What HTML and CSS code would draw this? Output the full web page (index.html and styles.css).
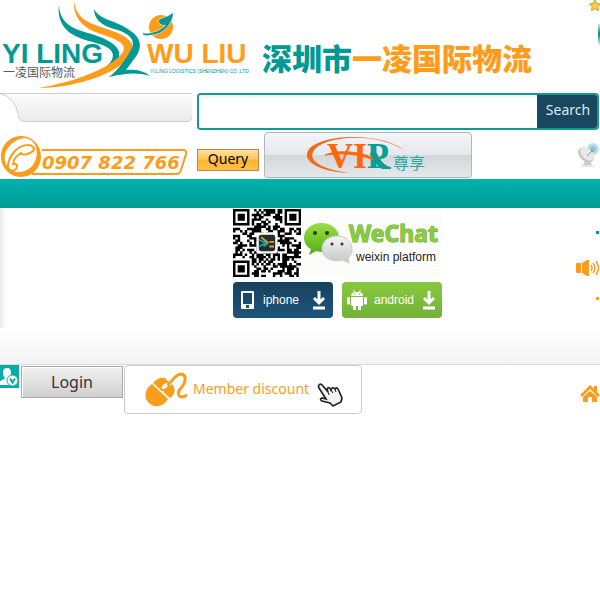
FILE: index.html
```html
<!DOCTYPE html>
<html lang="en">
<head>
<meta charset="utf-8">
<title>YI LING WU LIU</title>
<link rel="stylesheet" href="styles.css">
</head>
<body>
<header class="masthead">
  <svg class="logo" width="251" height="93" viewBox="0 0 251 93" role="img" aria-label="Yi Ling Wu Liu">
    <path class="teal" d="M59 5C60 22 70 28 88 33C106 38 122 46 119 57C117 65 108 69 101 70C110 65 115 58 112 52C108 44 92 43 80 38C64 32 57 20 59 5Z"/>
    <path class="orange" d="M74 1C76 18 88 23 104 28C122 34 136 40 132 52C126 70 80 88 38 88C75 82 112 68 123 52C128 42 112 38 98 33C80 27 73 14 74 1Z"/>
    <path class="teal" d="M94 9C100 20 114 20 126 28C140 36 143 44 137 55L126 70C134 69 143 70 150 76C138 72 126 73 109 77C118 70 127 58 132 48C136 38 126 32 114 29C100 25 94 18 94 9Z"/>
    <circle class="orange" cx="161" cy="27" r="12"/>
    <path class="planet-ring" d="M143 33C147 35 160 32 166 25C161 26 157 22 160 19C164 18 169 16 173 13C173 22 165 32 156 34C148 36 142 36 143 33Z"/>
    <text class="brand teal" x="2" y="63">YI LING</text>
    <text class="brand orange" x="147" y="63">WU LIU</text>
    <text class="brand-cn" x="3" y="77">一凌国际物流</text>
    <text class="brand-small teal" x="150" y="73">YI.LING LOGISTICS (SHENZHEN) CO.,LTD</text>
  </svg>
  <h1 class="company"><span class="c-teal">深圳市</span>一凌国际物流</h1>
  <div class="corner">
    <svg width="12" height="12" viewBox="0 0 12 12"><path d="M6 0L7.600 3.500L11.500 4L8.800 6.800L9.500 10.500L6 8.800L2.500 10.500L3.200 6.800L.5 4L4.400 3.500Z" fill="#fbd04a" stroke="#d99a1c"/></svg>
    <span class="knob"></span>
  </div>
</header>

<div class="search-row">
  <svg class="tab" width="192" height="30" viewBox="0 0 192 30">
    <defs><linearGradient id="tabfill" x2="0" y2="1"><stop offset="0" stop-color="#fbfbfb"/><stop offset="1" stop-color="#ececec"/></linearGradient></defs>
    <path d="M0 .5H192V24Q192 28.500 187 28.500H25Q18 28.500 18 20Q15 5 0 .5Z" fill="url(#tabfill)"/>
    <path d="M0 .5H192M0 .5Q15 5 18 20Q18 28.500 25 28.500H187Q191.500 28.500 191.500 24" fill="none" stroke="#cfcfcf"/>
  </svg>
  <form class="search">
    <input class="search-box" type="text" aria-label="Search text">
    <button class="search-btn" type="button">Search</button>
  </form>
</div>

<div class="tools">
  <svg class="phone" width="190" height="46" viewBox="0 0 190 46" role="img" aria-label="0907 822 766">
    <path d="M42 16H183Q187 16 186 20L181 36Q180 40 176 40H32" fill="none" stroke="#fc9c1b" stroke-width="2"/>
    <path fill="#fc9c1b" fill-rule="evenodd" d="M21 2A20 20.500 0 1 1 20.900 2ZM20 5C10 8 3 18 5 27C7 37 17 41 27 36C36 31 39 20 35 11C32 5 26 3 20 5Z"/>
    <path d="M33 13C30 9 20 11 14 18C8 25 6 34 10 36C14 38 17 35 17 32C17 30 14 29 13 31C13 27 16 22 21 19C22 22 30 20 33 17Q35 15 33 13Z" fill="#fff" stroke="#fc9c1b" stroke-width="2"/>
    <text class="phone-no" x="42" y="35">0907 822 766</text>
  </svg>
  <button class="query" type="button">Query</button>
  <button class="vip" type="button" aria-label="VIP">
    <svg width="130" height="42" viewBox="0 0 130 42">
      <text class="vip-text" x="26" y="34" fill="#ff6709">VI<tspan fill="#0a9d98">P</tspan></text>
      <path d="M104 17C86 0 28-2 10 13C-3 25 16 38 48 39C18 35 4 25 15 14C32 0 80 0 104 17Z" fill="#f26a1c"/>
      <path d="M24 21C42 14 71 18 89 35C75 25 55 17 24 21Z" fill="#ff6709" stroke="#ff6709"/>
      <path d="M69 19L75 18C80 27 83 32 90 33V35H81Q76 33 69 20Z" fill="#0a9d98"/>
      <text class="vip-cn" x="92" y="35">尊享</text>
    </svg>
  </button>
  <svg class="dish" width="22" height="26" viewBox="0 0 22 26">
    <circle cx="15" cy="7" r="6" fill="#b9dfeb"/><circle cx="15" cy="7" r="3" fill="#8bc6dc"/>
    <ellipse cx="10" cy="24" rx="8" ry="1" fill="#e5e5e5"/>
    <path d="M7 18L5 23H14L11 18Z" fill="#ccc"/>
    <ellipse cx="8" cy="13" rx="6" ry="9" transform="rotate(-48 8 13)" fill="#c6c6c6"/>
    <ellipse cx="9" cy="12" rx="5" ry="8" transform="rotate(-48 9 12)" fill="#e9e9e9"/>
    <path d="M9 14L14 9" stroke="#999"/><circle cx="14" cy="9" r="1" fill="#888"/>
  </svg>
</div>

<nav class="bar"></nav>

<main class="stage">
  <section class="apps">
    <div class="wechat">
      <svg class="qr" width="68" height="68" viewBox="0 0 29 29" role="img" aria-label="QR code">
        <path id="qr-modules"/>
        <rect x="10" y="10" width="9" height="9" rx="1" fill="#fff"/>
        <rect x="11" y="11" width="7" height="7" rx="1" fill="#24302f"/>
        <path d="M11 13L14 14.500L11 16M13 16L15 14.500" fill="none" stroke="#15a8a0" stroke-width=".7"/>
        <path d="M12 12L15 14.500M15.500 14H17.500M15.500 16H17.500" stroke="#e69a30" stroke-width=".8"/>
      </svg>
      <svg class="wechat-card" width="139" height="68" viewBox="0 0 139 68" role="img" aria-label="WeChat weixin platform">
        <defs>
          <linearGradient id="green" x2="0" y2="1"><stop offset="0" stop-color="#9be043"/><stop offset="1" stop-color="#55a91c"/></linearGradient>
          <linearGradient id="grey" x2="0" y2="1"><stop offset="0" stop-color="#f4f4f4"/><stop offset="1" stop-color="#c3c7c3"/></linearGradient>
        </defs>
        <path d="M18 14C8 14 1 21 1 29C1 34 4 38 8 40L6 46L13 42C26 46 36 38 36 29C36 20 28 14 18 14Z" fill="url(#green)"/>
        <circle cx="12" cy="24" r="2" fill="#263d13"/><circle cx="24" cy="24" r="2" fill="#263d13"/>
        <path d="M34 27C26 27 19 32 19 40C19 49 30 54 40 51L46 54L45 49C48 47 49 43 49 40C49 32 42 27 34 27Z" fill="url(#grey)" stroke="#c9cec7"/>
        <circle cx="29" cy="35" r="1.500" fill="#333"/><circle cx="39" cy="35" r="1.500" fill="#333"/>
        <rect x="51" y="38" width="88" height="18" fill="#fff"/>
        <text class="wechat-name" x="46" y="33">WeChat</text>
        <text class="wechat-sub" x="53" y="52">weixin platform</text>
      </svg>
    </div>
    <div class="stores">
      <a class="store store-ios" href="#">
        <svg width="16" height="20" viewBox="0 0 16 20"><path fill="#fff" fill-rule="evenodd" d="M2 1H13Q14 1 14 2V18Q14 19 13 19H2Q1 19 1 18V2Q1 1 2 1ZM3 3V14H12V3ZM6 15V18H9V15Z"/></svg>
        <span class="store-name">iphone</span>
        <svg width="14" height="20" viewBox="0 0 14 20"><path d="M7 1V13M2 8L7 13L12 8M1 18H13" fill="none" stroke="#fff" stroke-width="3"/></svg>
      </a>
      <a class="store store-android" href="#">
        <svg width="20" height="20" viewBox="0 0 20 20"><path fill="#fff" d="M4 6Q4 3 7 2L6 0H7L8 2H12L13 0H14L13 2Q16 3 16 6ZM4 7H16V16H14V20H11V16H9V20H6V16H4ZM0 8Q1.500 6 3 8V14Q1.500 15 0 14ZM17 8Q18.500 6 20 8V14Q18.500 15 17 14Z"/><circle cx="7.500" cy="4" r=".8" fill="#80c13c"/><circle cx="12.500" cy="4" r=".8" fill="#80c13c"/></svg>
        <span class="store-name">android</span>
        <svg width="14" height="20" viewBox="0 0 14 20"><path d="M7 1V13M2 8L7 13L12 8M1 18H13" fill="none" stroke="#fff" stroke-width="3"/></svg>
      </a>
    </div>
  </section>
  <aside class="side">
    <span class="dot dot-teal"></span>
    <svg width="24" height="16" viewBox="0 0 24 16"><path fill="#fc9c1b" d="M0 4Q0 3 1 3H5V13H1Q0 13 0 12ZM6 3L11 0H13V16H11L6 13Z"/><path d="M15 5Q17 8 15 11M17 3Q21 8 17 13M20 1Q25 8 20 15" fill="none" stroke="#fc9c1b" stroke-width="1.500"/></svg>
    <span class="dot dot-orange"></span>
  </aside>
</main>

<div class="fade"></div>

<footer class="member">
  <svg class="user" width="19" height="23" viewBox="0 0 19 23">
    <rect width="19" height="23" fill="#07aca4"/>
    <path fill="#fff" d="M7 3C10 3 11 5 11 8C11 10 10 12 9 13C10 14 12 14 12 15V20H0V17C0 15 4 15 5 13C3 11 3 9 3 7C3 5 4 3 7 3Z"/>
    <circle cx="12.500" cy="15.500" r="5.500" fill="#fff" stroke="#07aca4"/><path d="M10 13.500L12.500 17.500L15 13.500" fill="none" stroke="#07aca4" stroke-width="2"/>
  </svg>
  <button class="login" type="button">Login</button>
  <button class="discount" type="button">
    <svg width="44" height="36" viewBox="0 0 44 36">
      <path fill="#fc9c1b" d="M9 10Q14 5 20 6L25 12L17 19L8 11ZM7 12L23 27C18 36 7 36 3 30C-2 24 1 16 7 12ZM27 12C32 17 29 24 25 26L18 20Z"/>
      <ellipse cx="20" cy="14" rx="5" ry="3" transform="rotate(-42 20 14)" fill="#fff" stroke="#fc9c1b" stroke-width="2"/>
      <path d="M22 12C26 13 29 2 36 2C43 3 40 12 36 16C31 22 34 28 42 23" fill="none" stroke="#fc9c1b" stroke-width="3"/>
    </svg>
    <span class="discount-text">Member discount</span>
    <svg class="hand" width="27" height="25" viewBox="0 0 27 25"><path d="M2 2Q4 0 6 3L11 9L10 6Q12 3 14 7Q15 3 18 6Q20 3 22 8L25 15L24 19L16 23L13 20L5 18Q2 16 5 15L9 16L2 5Q1 3 2 2Z" fill="#f3f3f3" stroke="#292323" stroke-width="1.700"/><path d="M11 9L12 12M14 7L16 10M18 6L19 9" stroke="#292323"/></svg>
  </button>
  <svg class="home" width="20" height="18" viewBox="0 0 20 18"><path fill="#fc9c1b" d="M10 0L14 4V1H17V7L20 10L18 12L10 4L2 12L0 10ZM10 6L17 12V17H12V12H8V17H3V12Z"/></svg>
</footer>
<script src="qr.js"></script>
</body>
</html>
```
FILE: styles.css
```css
* { box-sizing: border-box; }
body {
  margin: 0;
  background: #fff;
  font: 14px/20px "Noto Sans", "Noto Sans CJK SC", sans-serif;
  overflow-x: hidden;
}
svg { display: block; flex: none; }
button { font: inherit; padding: 0; cursor: pointer; }
.teal { fill: #009993; }
.orange { fill: #ff9c1b; }
.c-teal { color: #009993; }

.masthead { display: flex; align-items: flex-start; }
.planet-ring { fill: #009993; stroke: #fff; stroke-width: 1; paint-order: stroke; }
.brand { font: bold 28px "Liberation Sans", sans-serif; }
.brand-cn { font: 12px "Noto Sans CJK SC", sans-serif; fill: #58595b; }
.brand-small { font: 5px "Liberation Sans", sans-serif; }
.company {
  margin: 38px 0 0 11px;
  font: 900 30px/38px "Noto Sans CJK SC", sans-serif;
  color: #ff9c1b;
  white-space: nowrap;
}
.corner {
  margin-left: auto;
  margin-right: -1px;
  display: flex;
  flex-direction: column;
  align-items: flex-end;
  gap: 11px;
}
.knob { width: 3px; height: 22px; border-radius: 3px 0 0 3px; background: linear-gradient(#d8eeee, #078b85, #d8eeee); }

.search-row { display: flex; gap: 5px; align-items: flex-start; padding-right: 1px; }
.search {
  flex: 1;
  display: flex;
  height: 37px;
  border: 2px solid #149a94;
  border-radius: 4px;
  overflow: hidden;
}
.search-box { flex: 1; min-width: 0; border: 0; outline: 0; background: linear-gradient(#ececec, #fff 4px); }
.search-btn { width: 60px; border: 0; background: #18475f; color: #d9eef0; padding: 0 0 3px 2px; }

.tools { display: flex; align-items: flex-start; padding-top: 2px; height: 49px; }
.phone { margin-top: 2px; }
.phone-no { font: italic bold 18px "DejaVu Sans", sans-serif; fill: #fc9c1b; }
.query {
  width: 62px;
  height: 22px;
  margin: 17px 5px 0 7px;
  border: 1px solid #c58546;
  line-height: 18px;
  padding-bottom: 2px;
  background: linear-gradient(#ffe0a0, #ffc65c 45%, #ffb52e 50%, #ffc14a);
  color: #000;
}
.vip {
  width: 208px;
  height: 46px;
  display: flex;
  align-items: center;
  padding-left: 36px;
  border: 1px solid #adb7c1;
  border-radius: 4px;
  background: linear-gradient(#f3f5f7, #e6e9ec 50%, #d3d7da 51%, #e6e9eb);
}
.vip-text { font: bold 36px "Liberation Serif", serif; }
.vip-cn { font: 16px "Noto Sans CJK SC", sans-serif; fill: #28a7a4; }
.dish { margin: 10px 0 0 auto; }

.bar { height: 29px; background: linear-gradient(#00b3ad, #009b95); }

.stage {
  display: grid;
  grid-template-columns: 1fr 209px 1fr;
  min-height: 120px;
  padding-left: 75px;
  background: linear-gradient(90deg, #ebebeb, #fff 6px);
}
.apps { grid-column: 2; padding-top: 1px; }
.wechat { display: flex; gap: 2px; }
.wechat-card { background: #fbfdfa; }
.wechat-name { font: bold 23px "Noto Sans", sans-serif; fill: #88cd3a; stroke: #6f9c45; stroke-width: 1px; paint-order: stroke; }
.wechat-sub { font: 12px "Liberation Sans", sans-serif; fill: #222; }
.stores { display: grid; grid-template-columns: 1fr 1fr; gap: 9px; margin-top: 5px; }
.store {
  height: 36px;
  display: flex;
  align-items: center;
  gap: 7px;
  padding: 0 7px;
  border-radius: 4px;
  color: #fff;
  font: 12px/16px "Liberation Sans", sans-serif;
  text-decoration: none;
}
.store svg:last-child { margin-left: auto; }
.store-ios { background: linear-gradient(#18425c, #1c557c); }
.store-android { background: linear-gradient(#88c840, #72b238); padding: 0 6px 0 5px; }
.side { display: flex; flex-direction: column; align-items: flex-end; padding-top: 23px; }
.dot { width: 3px; height: 3px; margin-right: 1px; }
.dot-teal { background: #009993; margin-bottom: 26px; }
.dot-orange { background: #fc9c1b; margin-top: 21px; }

.fade { height: 37px; background: linear-gradient(#fff, #f3f3f3); border-bottom: 1px solid #dadada; }

.member { display: flex; align-items: flex-start; }
.login {
  width: 102px;
  height: 32px;
  margin: 1px 1px 0 2px;
  border: 1px solid #aaa;
  box-shadow: inset 1px 1px #fff;
  background: linear-gradient(#f0f0f0, #dedede 60%, #cfcfcf);
  font-size: 16px;
  color: #333;
}
.discount {
  width: 238px;
  height: 49px;
  display: flex;
  align-items: center;
  padding-left: 20px;
  border: 1px solid #ccc;
  border-radius: 4px;
  background: #fff;
  color: #fc9c1b;
}
.discount-text { margin: 0 8px 2px 4px; }
.hand { margin-top: 12px; }
.home { margin: 20px 0 0 auto; }
```
FILE: qr.js
```js
// Builds the QR symbol as one path of unit squares.
const SIZE = 29;
const finders = [[0, 0], [SIZE - 7, 0], [0, SIZE - 7]];

function finderModule(x, y) {
  for (const [fx, fy] of finders) {
    const dx = x - fx;
    const dy = y - fy;
    if (dx < -1 || dy < -1 || dx > 7 || dy > 7) continue;
    const ring = Math.max(Math.abs(dx - 3), Math.abs(dy - 3));
    return ring === 3 || ring < 2;
  }
  return null;
}

let seed = 907822;
function nextBit() {
  seed = (seed * 1103515245 + 12345) % 2147483648;
  return (seed >> 16) % 2 === 0;
}

let d = "";
for (let y = 0; y < SIZE; y++) {
  for (let x = 0; x < SIZE; x++) {
    const bit = nextBit();
    const fixed = finderModule(x, y);
    if (fixed === null ? bit : fixed) d += `M${x} ${y}h1.05v1.05h-1.05z`;
  }
}
document.getElementById("qr-modules").setAttribute("d", d);
```
